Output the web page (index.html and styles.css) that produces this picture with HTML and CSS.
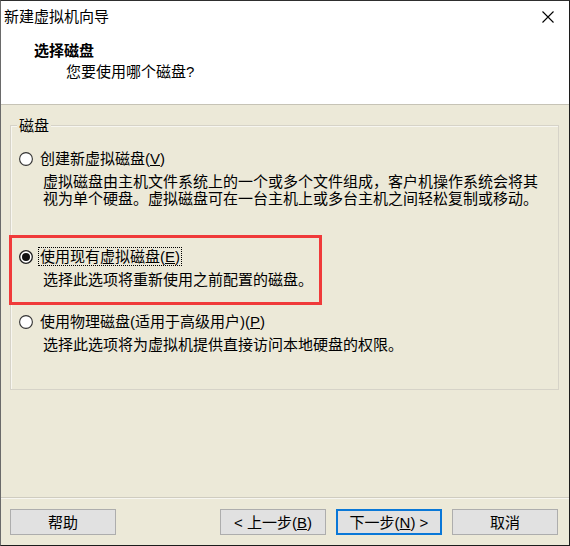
FILE: index.html
```html
<!DOCTYPE html>
<html lang="zh-CN">
<head>
<meta charset="utf-8">
<title>新建虚拟机向导</title>
<link rel="stylesheet" href="styles.css">
</head>
<body>
<div class="window">
  <div class="header">
    <div class="titlebar">
      <span class="title">新建虚拟机向导</span>
      <svg class="close" width="12" height="12" viewBox="0 0 12 12"><path d="M0.5 0.5 L11.5 11.5 M11.5 0.5 L0.5 11.5" stroke="#000" stroke-width="1.1" fill="none"/></svg>
    </div>
    <div class="heading">选择磁盘</div>
    <div class="subheading">您要使用哪个磁盘?</div>
  </div>
  <div class="body">
    <div class="groupbox">
      <span class="legend">磁盘</span>
      <div class="option option-create">
        <div class="opt-row">
          <svg class="radio" width="14" height="14" viewBox="0 0 14 14"><circle cx="7" cy="7" r="6.4" fill="#fff" stroke="#333" stroke-width="1.1"/></svg>
          <span class="opt-label">创建新虚拟磁盘(<u>V</u>)</span>
        </div>
        <p class="opt-desc">虚拟磁盘由主机文件系统上的一个或多个文件组成，客户机操作系统会将其<br>视为单个硬盘。虚拟磁盘可在一台主机上或多台主机之间轻松复制或移动。</p>
      </div>
      <div class="option option-existing">
        <div class="opt-row">
          <svg class="radio" width="14" height="14" viewBox="0 0 14 14"><circle cx="7" cy="7" r="6.3" fill="#fff" stroke="#222" stroke-width="1.3"/><circle cx="7" cy="7" r="4" fill="#111"/></svg>
          <span class="opt-label focused">使用现有虚拟磁盘(<u>E</u>)</span>
        </div>
        <p class="opt-desc">选择此选项将重新使用之前配置的磁盘。</p>
      </div>
      <div class="option option-physical">
        <div class="opt-row">
          <svg class="radio" width="14" height="14" viewBox="0 0 14 14"><circle cx="7" cy="7" r="6.4" fill="#fff" stroke="#333" stroke-width="1.1"/></svg>
          <span class="opt-label">使用物理磁盘(适用于高级用户)(<u>P</u>)</span>
        </div>
        <p class="opt-desc">选择此选项将为虚拟机提供直接访问本地硬盘的权限。</p>
      </div>
    </div>
  </div>
  <div class="footer">
    <button class="btn">帮助</button>
    <div class="spacer"></div>
    <button class="btn">&lt; 上一步(<u>B</u>)</button>
    <button class="btn btn-default">下一步(<u>N</u>) &gt;</button>
    <button class="btn">取消</button>
  </div>
  <div class="highlight"></div>
</div>
</body>
</html>
```

FILE: styles.css
```css
* { box-sizing: border-box; }

html, body {
  margin: 0;
  padding: 0;
  background: #ece9d8;
}

body {
  font-family: "Liberation Sans", "Noto Sans CJK SC", sans-serif;
  font-size: 15px;
  line-height: 17px;
  color: #000;
}

.window {
  position: relative;
  width: 570px;
  height: 546px;
  display: flex;
  flex-direction: column;
  background: #ece9d8;
  border-top: 1px solid #2e2e2e;
  border-left: 1px solid #6a6a6a;
  border-right: 1px solid #1c1c1c;
  border-bottom: 1px solid #1c1c1c;
}

.header {
  height: 104px;
  flex: none;
  background: #fff;
  border-bottom: 1px solid #c6c3b6;
  padding: 7px 15px 0 3px;
}

.titlebar {
  height: 17px;
  display: flex;
  align-items: center;
  justify-content: space-between;
}

.title { white-space: nowrap; }

.close { display: block; }

.heading {
  margin-top: 17px;
  padding-left: 30px;
  font-weight: bold;
}

.subheading {
  margin-top: 4px;
  padding-left: 62px;
}

.body {
  flex: 1;
  padding: 20px 10px 0 9px;
}

.groupbox {
  position: relative;
  height: 265px;
  border: 1px solid #d6d3c8;
  box-shadow: inset 1px 1px 0 #f7f6f0;
  padding-top: 24px;
}

.legend {
  position: absolute;
  top: -9px;
  left: 6px;
  padding: 0 2px;
  background: #ece9d8;
}

.opt-row {
  display: flex;
  align-items: center;
  gap: 7px;
  padding-left: 8px;
  height: 17px;
}

.radio { display: block; flex: none; }

.opt-label { white-space: nowrap; }

.opt-label.focused {
  padding: 0 1px;
  margin-left: -1px;
  outline: 1px dotted #000;
  outline-offset: 0;
}

.opt-desc {
  margin: 6px 0 0;
  padding-left: 32px;
  white-space: nowrap;
}

.option-existing { margin-top: 41px; }
.option-physical { margin-top: 25px; }

.footer {
  height: 48px;
  flex: none;
  border-top: 1px solid #cfccc0;
  box-shadow: inset 0 1px 0 #f7f6f0;
  display: flex;
  align-items: flex-start;
  gap: 10px;
  padding: 11px 11px 0 9px;
}

.spacer { flex: 1; }

.btn {
  width: 106px;
  height: 26px;
  padding: 0;
  font: inherit;
  color: #000;
  background: #e1e1e1;
  border: 1px solid #adadad;
  display: flex;
  align-items: center;
  justify-content: center;
  white-space: nowrap;
}

.btn-default {
  border: 2px solid #0a78d7;
}

.highlight {
  position: absolute;
  left: 8px;
  top: 234px;
  width: 313px;
  height: 70px;
  border: 3px solid #f03a3a;
  pointer-events: none;
}
```
